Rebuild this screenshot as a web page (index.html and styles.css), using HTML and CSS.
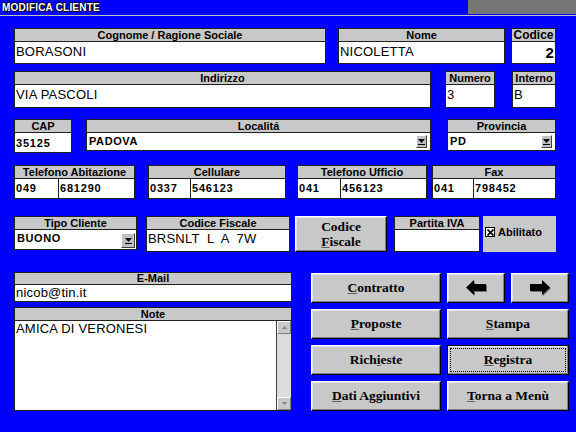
FILE: index.html
```html
<!DOCTYPE html>
<html>
<head>
<meta charset="utf-8">
<title>Modifica Cliente</title>
<link rel="stylesheet" href="styles.css">
</head>
<body>
<div class="titlebar">
  <span class="title">MODIFICA CLIENTE</span>
  <span class="titlegray"></span>
</div>
<div class="form">
  <div class="row r1">
    <div class="field f-cognome"><div class="lbl">Cognome / Ragione Sociale</div><div class="val">BORASONI</div></div>
    <div class="field f-nome"><div class="lbl">Nome</div><div class="val">NICOLETTA</div></div>
    <div class="field f-codice"><div class="lbl big">Codice</div><div class="val num">2</div></div>
  </div>
  <div class="row r2">
    <div class="field f-indirizzo"><div class="lbl">Indirizzo</div><div class="val">VIA PASCOLI</div></div>
    <div class="field f-numero"><div class="lbl">Numero</div><div class="val">3</div></div>
    <div class="field f-interno"><div class="lbl">Interno</div><div class="val">B</div></div>
  </div>
  <div class="row r3">
    <div class="field f-cap"><div class="lbl">CAP</div><div class="val digits">35125</div></div>
    <div class="field combo f-loc"><div class="lbl">Localitá</div>
      <div class="cbox"><span class="ctext">PADOVA</span><span class="cbtn"><svg width="7" height="6" viewBox="0 0 7 6"><path d="M0 0H7L3.5 4Z" fill="#000"/><rect x="0" y="5" width="7" height="1" fill="#000"/></svg></span></div></div>
    <div class="field combo f-prov"><div class="lbl">Provincia</div>
      <div class="cbox"><span class="ctext">PD</span><span class="cbtn"><svg width="7" height="6" viewBox="0 0 7 6"><path d="M0 0H7L3.5 4Z" fill="#000"/><rect x="0" y="5" width="7" height="1" fill="#000"/></svg></span></div></div>
  </div>
  <div class="row r4">
    <div class="field f-telab"><div class="lbl">Telefono Abitazione</div><div class="val split"><span class="pre">049</span><span class="post">681290</span></div></div>
    <div class="field f-cell"><div class="lbl">Cellulare</div><div class="val split"><span class="pre">0337</span><span class="post">546123</span></div></div>
    <div class="field f-teluff"><div class="lbl">Telefono Ufficio</div><div class="val split"><span class="pre">041</span><span class="post">456123</span></div></div>
    <div class="field f-fax"><div class="lbl">Fax</div><div class="val split"><span class="pre">041</span><span class="post">798452</span></div></div>
  </div>
  <div class="row r5">
    <div class="field combo f-tipo"><div class="lbl">Tipo Cliente</div>
      <div class="cbox"><span class="ctext">BUONO</span><span class="cbtn big"><svg width="7" height="6" viewBox="0 0 7 6"><path d="M0 0H7L3.5 4Z" fill="#000"/><rect x="0" y="5" width="7" height="1" fill="#000"/></svg></span></div></div>
    <div class="field f-codfis"><div class="lbl">Codice Fiscale</div><div class="val top">BRSNLT  L  A  7W</div></div>
    <div class="btn f-cfbtn"><span>Codice<br><u>F</u>iscale</span></div>
    <div class="field f-piva"><div class="lbl">Partita IVA</div><div class="val"></div></div>
    <div class="panel f-abil"><span class="check"><svg width="7" height="7" viewBox="0 0 7 7"><path d="M0.5 0.5L6.5 6.5M6.5 0.5L0.5 6.5" stroke="#000" stroke-width="1.6"/></svg></span><span class="abtxt">Abilitato</span></div>
  </div>
  <div class="row r6">
    <div class="leftcol">
      <div class="field f-email"><div class="lbl">E-Mail</div><div class="val">nicob@tin.it</div></div>
      <div class="field f-note"><div class="lbl">Note</div>
        <div class="notebody">
          <div class="notetext">AMICA DI VERONESI</div>
          <div class="scroll">
            <span class="sbtn"><svg width="5" height="3" viewBox="0 0 5 3"><path d="M0 3H5L2.5 0Z" fill="#808080"/></svg></span>
            <span class="strack"></span>
            <span class="sbtn"><svg width="5" height="3" viewBox="0 0 5 3"><path d="M0 0H5L2.5 3Z" fill="#808080"/></svg></span>
          </div>
        </div>
      </div>
    </div>
    <div class="buttons">
      <div class="btn"><span><u>C</u>ontratto</span></div>
      <div class="arrows">
        <div class="btn arrow"><svg width="23" height="17" viewBox="0 0 23 17"><path d="M2 8.5L10 1V5H22V12H10V16Z" fill="#707070"/><path d="M1 7.5L9 0V4H21V11H9V15Z" fill="#000"/></svg></div>
        <div class="btn arrow"><svg width="23" height="17" viewBox="0 0 23 17"><path d="M22 8.5L14 1V5H2V12H14V16Z" fill="#707070"/><path d="M21 7.5L13 0V4H1V11H13V15Z" fill="#000"/></svg></div>
      </div>
      <div class="btn"><span><u>P</u>roposte</span></div>
      <div class="btn"><span><u>S</u>tampa</span></div>
      <div class="btn"><span>Rich<u>i</u>este</span></div>
      <div class="btn focus"><span><u>R</u>egistra</span></div>
      <div class="btn"><span><u>D</u>ati Aggiuntivi</span></div>
      <div class="btn"><span><u>T</u>orna a Menù</span></div>
    </div>
  </div>
</div>
</body>
</html>
```

FILE: styles.css
```css
* { box-sizing: border-box; }
html, body { margin: 0; padding: 0; }
body {
  width: 576px;
  height: 432px;
  overflow: hidden;
  background: #0000ff;
  font-family: "Liberation Sans", Arial, sans-serif;
  color: #000;
}
.titlebar {
  height: 16px;
  display: flex;
  justify-content: space-between;
  border-bottom: 1px solid #c0c0c0;
}
.title {
  color: #fff;
  font-weight: bold;
  font-size: 10px;
  line-height: 15px;
  padding-left: 2px;
  text-shadow: 1px 1px 0 #000, -1px 0 0 #000, 0 -1px 0 #000;
  letter-spacing: 0.2px;
}
.titlegray {
  width: 108px;
  height: 14px;
  background: #767676;
}
.form { padding-left: 14px; }
.row { display: flex; align-items: flex-start; }
.r1 { margin-top: 12px; }
.r2 { margin-top: 7px; }
.r3 { margin-top: 11px; }
.r4 { margin-top: 12px; }
.r5 { margin-top: 17px; }
.r6 { margin-top: 20px; }

.field {
  display: flex;
  flex-direction: column;
  border: 1px solid #202020;
  background: #fff;
}
.lbl {
  height: 13px;
  flex: none;
  background: #c8c8c8;
  border-bottom: 1px solid #202020;
  text-align: center;
  font-weight: bold;
  font-size: 11px;
  line-height: 12px;
  white-space: nowrap;
  overflow: hidden;
}
.lbl.big { font-size: 12px; }
.val {
  flex: 1;
  font-size: 13px;
  line-height: 18px;
  padding: 1px 0 0 1px;
  white-space: pre;
  letter-spacing: 0.2px;
  overflow: hidden;
}
.val.top { line-height: 16px; }
.val.num {
  text-align: right;
  font-weight: bold;
  font-size: 15px;
  line-height: 20px;
  padding: 1px 1px 0 0;
}
.val.digits, .split {
  font-weight: bold;
  font-size: 11px;
  letter-spacing: 0.8px;
  line-height: 18px;
}
.split { display: flex; padding: 0; }
.split .pre { padding-left: 1px; border-right: 1px solid #202020; }
.split .post { padding-left: 1px; flex: 1; }

.f-cognome { width: 312px; height: 36px; }
.f-nome { width: 167px; height: 36px; margin-left: 12px; }
.f-codice { width: 45px; height: 36px; margin-left: 6px; }

.f-indirizzo { width: 417px; height: 37px; }
.f-numero { width: 50px; height: 37px; margin-left: 14px; }
.f-interno { width: 44px; height: 37px; margin-left: 17px; }

.f-cap { width: 58px; height: 34px; }
.f-loc { width: 345px; height: 32px; margin-left: 14px; }
.f-prov { width: 109px; height: 32px; margin-left: 16px; }

.f-telab { width: 121px; height: 34px; }
.f-telab .pre { width: 44px; }
.f-cell { width: 138px; height: 34px; margin-left: 13px; }
.f-cell .pre { width: 42px; }
.f-teluff { width: 130px; height: 34px; margin-left: 11px; }
.f-teluff .pre { width: 43px; }
.f-fax { width: 124px; height: 34px; margin-left: 5px; }
.f-fax .pre { width: 41px; }

.f-tipo { width: 123px; height: 34px; }
.f-codfis { width: 144px; height: 36px; margin-left: 9px; }
.f-cfbtn { width: 92px; height: 36px; margin-left: 5px; line-height: 15px; }
.f-piva { width: 86px; height: 36px; margin-left: 7px; }
.f-abil { width: 73px; height: 36px; margin-left: 3px; }

.combo { border-color: #202020; }
.cbox {
  flex: 1;
  display: flex;
  align-items: flex-start;
  justify-content: space-between;
  background: #fff;
  border-left: 1px solid #fff;
  padding: 1px 3px 0 1px;
}
.ctext {
  font-weight: bold;
  font-size: 11px;
  line-height: 15px;
  letter-spacing: 0.6px;
}
.cbtn {
  width: 11px;
  height: 13px;
  margin-top: 1px;
  background: #c0c0c0;
  border: 1px solid;
  border-color: #fff #404040 #404040 #fff;
  display: flex;
  align-items: center;
  justify-content: center;
}
.cbtn.big { width: 14px; height: 15px; margin-top: 2px; }
.f-tipo .cbox { padding-right: 1px; }

.panel {
  background: #c8c8c8;
  display: flex;
  align-items: center;
  padding: 0 0 4px 2px;
}
.check {
  width: 10px;
  height: 10px;
  background: #fff;
  border: 1px solid #000;
  display: flex;
  align-items: center;
  justify-content: center;
}
.abtxt {
  font-weight: bold;
  font-size: 11px;
  margin-left: 3px;
}

.leftcol { width: 278px; display: flex; flex-direction: column; }
.f-email { height: 30px; }
.f-email .lbl { height: 12px; line-height: 11px; }
.f-email .val { line-height: 16px; padding-top: 0; }
.f-note { height: 104px; margin-top: 5px; }
.notebody { flex: 1; display: flex; }
.notetext {
  flex: 1;
  font-size: 13px;
  line-height: 15px;
  padding-left: 1px;
  letter-spacing: 0.2px;
}
.scroll {
  width: 15px;
  display: flex;
  flex-direction: column;
  border-left: 1px solid #404040;
}
.sbtn {
  height: 13px;
  background: #c8c8c8;
  border: 1px solid;
  border-color: #fff #808080 #808080 #fff;
  display: flex;
  align-items: center;
  justify-content: center;
}
.strack {
  flex: 1;
  background: #dcdcdc;
}

.buttons {
  margin-left: 19px;
  margin-top: 1px;
  display: grid;
  grid-template-columns: 130px 122px;
  grid-auto-rows: 30px;
  column-gap: 6px;
  row-gap: 6px;
}
.arrows { display: flex; justify-content: space-between; }
.btn {
  background: #c8c8c8;
  border: 1px solid;
  border-color: #fff #000 #000 #fff;
  box-shadow: inset -1px -1px 0 #808080, inset 1px 1px 0 #e8e8e8;
  display: flex;
  align-items: center;
  justify-content: center;
  font-family: "Liberation Serif", "Times New Roman", serif;
  font-weight: bold;
  font-size: 13.5px;
  text-align: center;
}
.btn u { text-decoration-color: #606060; text-underline-offset: 1px; }
.btn.arrow { width: 58px; height: 30px; }
.btn.focus {
  border-color: #000;
  outline: 1px dotted #000;
  outline-offset: -4px;
}
```
